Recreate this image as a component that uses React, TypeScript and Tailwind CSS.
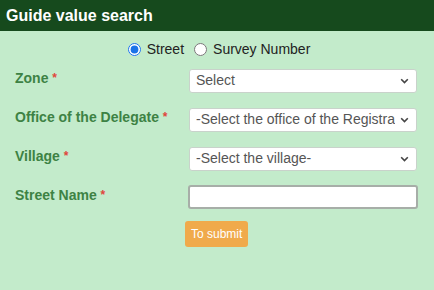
import React, { useState } from 'react';

const fields = [
    { label: 'Zone', type: 'select', placeholder: 'Select' },
    { label: 'Office of the Delegate', type: 'select', placeholder: '-Select the office of the Registrar-' },
    { label: 'Village', type: 'select', placeholder: '-Select the village-' },
    { label: 'Street Name', type: 'input', placeholder: '' },
];

const Chevron = () => (
    <svg width="9" height="6" viewBox="0 0 9 6" className="absolute right-[8px] top-[10px] pointer-events-none">
        <path d="M1.2 1.2 L4.5 4.5 L7.8 1.2" fill="none" stroke="#444" strokeWidth="1.6" />
    </svg>
);

const App: React.FC = () => {
    const [mode, setMode] = useState('street');

    return (
        <div className="w-[434px] h-[290px] bg-[#c3ebcb] font-['Liberation_Sans',Arial,sans-serif] overflow-hidden">
            <div className="h-[31px] bg-[#164a1d] flex items-center px-[6px]">
                <h2 className="text-white font-bold text-[16px] leading-none">Guide value search</h2>
            </div>

            <div className="flex items-center justify-center pt-[8px] pl-[4px] text-[14px] text-[#222]">
                <label className="flex items-center mr-[10px]">
                    <input
                        type="radio"
                        name="mode"
                        checked={mode === 'street'}
                        onChange={() => setMode('street')}
                        className="w-[13px] h-[13px] m-0 mr-[6px] accent-[#1a73e8]"
                    />
                    Street
                </label>
                <label className="flex items-center">
                    <input
                        type="radio"
                        name="mode"
                        checked={mode === 'survey'}
                        onChange={() => setMode('survey')}
                        className="w-[13px] h-[13px] m-0 mr-[6px]"
                    />
                    Survey Number
                </label>
            </div>

            <div className="flex flex-col gap-[15px] mt-[8px]">
                {fields.map((f) => (
                    <div key={f.label} className="flex items-start">
                        <div className="w-[189px] pl-[15px] pt-[2px] text-[14px] font-bold text-[#3d8244] leading-[16px]">
                            {f.label} <span className="text-[#e0463c] text-[12px] align-top">*</span>
                        </div>
                        {f.type === 'select' ? (
                            <div className="relative w-[228px] h-[24px]">
                                <select className="appearance-none w-full h-full bg-white border border-[#c9d2cb] rounded-[3px] pl-[6px] pr-[21px] text-[14px] text-[#555] font-['Liberation_Sans',Arial,sans-serif] outline-none overflow-hidden whitespace-nowrap">
                                    <option>{f.placeholder}</option>
                                </select>
                                <Chevron />
                            </div>
                        ) : (
                            <input
                                type="text"
                                className="w-[230px] h-[24px] -ml-[1px] bg-white border-2 border-[#a7aea8] rounded-[3px] outline-none"
                            />
                        )}
                    </div>
                ))}
            </div>

            <div className="pl-[185px] mt-[12px]">
                <button className="h-[26px] px-[6px] bg-[#f0aa4b] text-white text-[12px] rounded-[3px]">
                    To submit
                </button>
            </div>
        </div>
    );
};

export default App;
